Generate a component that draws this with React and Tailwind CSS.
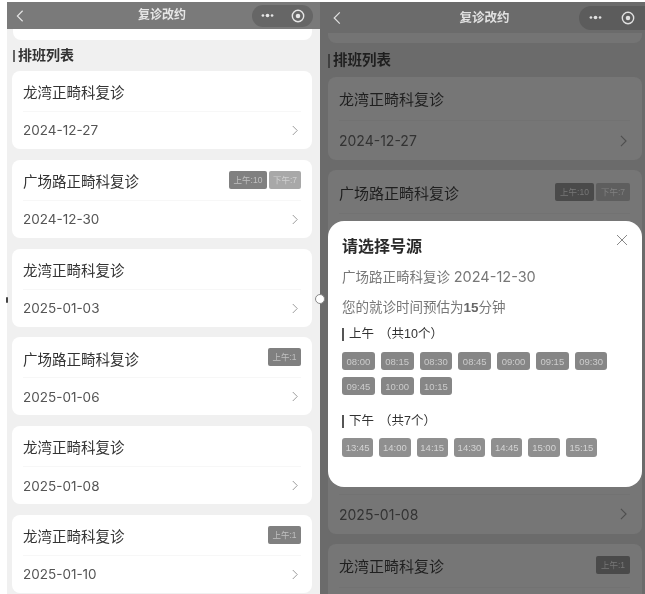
const F = { fontFamily: '"Liberation Sans","Noto Sans CJK SC",sans-serif' };
const L = { fontFamily: 'Inter,"Noto Sans CJK SC",sans-serif' };

const rows = [
  { name: "龙湾正畸科复诊", date: "2024-12-27", tags: [] },
  { name: "广场路正畸科复诊", date: "2024-12-30", tags: ["上午:10", "下午:7"], line: true },
  { name: "龙湾正畸科复诊", date: "2025-01-03", tags: [], line: true },
  { name: "广场路正畸科复诊", date: "2025-01-06", tags: ["上午:1"], line: true },
  { name: "龙湾正畸科复诊", date: "2025-01-08", tags: [], line: true },
  { name: "龙湾正畸科复诊", date: "2025-01-10", tags: ["上午:1"], line: true },
];

function Chevron({ className }) {
  return (
    <svg viewBox="0 0 8 14" className={className} fill="none" stroke="currentColor" strokeWidth="1.3">
      <path d="M1 1l6 6-6 6" />
    </svg>
  );
}

function Header({ dark }) {
  return (
    <div className={dark ? "grid h-[31px] shrink-0 grid-cols-[1fr_auto_1fr] items-center bg-[#6b6b6b] pl-[4px] text-[#e0e0e0]" : "grid h-[27px] shrink-0 grid-cols-[1fr_auto_1fr] items-center bg-[#7a7a7a] pl-[4px] pr-[7px] text-[#e6e6e6]"}>
      <svg viewBox="0 0 10 16" className={dark ? "ml-[9px] h-[14px] w-[8px]" : "ml-[5px] h-[12px] w-[8px]"} fill="none" stroke="currentColor" strokeWidth="1.5">
        <path d="M8.5 1L1.5 8l7 7" />
      </svg>
      <div className={dark ? "pt-[2px] text-center text-[12.5px] font-bold" : "pb-[2px] text-center text-[12px] font-bold"}>复诊改约</div>
      <div className="flex justify-end">
        <div className={dark ? "flex h-[24px] w-[66px] items-center justify-between rounded-l-full bg-[#5c5c5c] pl-[9px] pr-[10px]" : "flex h-[22px] w-[61px] items-center justify-between rounded-full bg-[#666666] pl-[8px] pr-[8px]"}>
          <svg viewBox="0 0 16 6" className="h-[5px] w-[15px]" fill="currentColor">
            <circle cx="2.5" cy="3" r="1.6" /><circle cx="8" cy="3" r="2.2" /><circle cx="13.5" cy="3" r="1.6" />
          </svg>
          <svg viewBox="0 0 16 16" className="h-[14px] w-[14px]" fill="none" stroke="currentColor">
            <circle cx="8" cy="8" r="6.5" strokeWidth="1.6" /><circle cx="8" cy="8" r="2.6" fill="currentColor" stroke="none" />
          </svg>
        </div>
      </div>
    </div>
  );
}

function Card({ row, dark }) {
  return (
    <div className={dark ? "flex h-[83px] shrink-0 flex-col rounded-[8px] bg-[#767676] pl-[11px] pr-[12px]" : "flex h-[78px] shrink-0 flex-col rounded-[8px] bg-white px-[11px]"}>
      <div className={dark ? "flex h-[44px] items-center justify-between border-b border-[#727272]" : "flex h-[41px] items-center justify-between border-b border-[#f7f7f7]"}>
        <span className={dark ? "pt-[4px] text-[15px] text-[#1f1f1f]" : "pt-[6px] text-[14.5px] text-[#333333]"}>{row.name}</span>
        <span className="flex gap-[2px]">
          {row.tags.map((t, i) => (
            <span key={t} className={
              dark
                ? (i === 0 ? "rounded-[2px] bg-[#4a4a4a] px-[5px] py-[3px] text-[8.5px] leading-[12px] text-[#777777]" : "rounded-[2px] bg-[#5e5e5e] px-[5px] py-[3px] text-[8.5px] leading-[12px] text-[#808080]")
                : (i === 0 ? "rounded-[2px] bg-[#808080] px-[4.5px] py-[3px] text-[8.5px] leading-[12px] text-[#c0c0c0]" : "rounded-[2px] bg-[#a8a8a8] px-[4px] py-[3px] text-[8.5px] leading-[12px] text-[#d0d0d0]")
            }>{t}</span>
          ))}
        </span>
      </div>
      <div className="flex flex-1 items-center justify-between">
        <span style={L} className={dark ? "text-[14px] text-[#333333]" : "text-[13.5px] text-[#555555]"}>{row.date}</span>
        <Chevron className={dark ? "mr-[3px] h-[12px] w-[7px] text-[#4f4f4f]" : "mr-[3px] h-[11px] w-[6px] text-[#999999]"} />
      </div>
    </div>
  );
}

function Chip({ t, pm }) {
  return (
    <span className={pm ? "rounded-[3px] bg-[#8f8f8f] px-[3.75px] py-[3px] text-[9.5px] leading-[13px] text-[#d4d4d4]" : "rounded-[3px] bg-[#868686] px-[4.5px] py-[2.5px] text-[9.5px] leading-[13px] text-[#cccccc]"}>{t}</span>
  );
}

function Modal() {
  const am = ["08:00","08:15","08:30","08:45","09:00","09:15","09:30","09:45","10:00","10:15"];
  const pm = ["13:45","14:00","14:15","14:30","14:45","15:00","15:15"];
  return (
    <div className="absolute left-[8px] top-[219px] h-[266px] w-[314px] rounded-[16px] bg-white pl-[14px] pr-[20px] pt-[15px]">
      <div className="text-[16px] font-bold leading-[22px] text-[#2a2a2a]">请选择号源</div>
      <svg viewBox="0 0 12 12" className="absolute right-[14px] top-[13px] h-[12px] w-[12px] text-[#888888]" fill="none" stroke="currentColor" strokeWidth="1">
        <path d="M1 1l10 10M11 1L1 11" />
      </svg>
      <div className="mt-[9px] text-[13.5px] leading-[20px] text-[#777777]">广场路正畸科复诊 <span style={L} className="text-[14.5px]">2024-12-30</span></div>
      <div className="mt-[10px] text-[13.5px] leading-[20px] text-[#777777]">您的就诊时间预估为<span className="font-bold text-[#666666]">15</span>分钟</div>
      <div className="mt-[8px] flex items-center text-[12.5px] leading-[16px] text-[#333333]">
        <span className="mr-[5px] h-[13px] w-[2px] bg-[#555555]" />上午<span className="ml-[5px]">（共10个）</span>
      </div>
      <div className="mt-[10px] flex flex-wrap gap-x-[6px] gap-y-[7px]">
        {am.map((t) => <Chip key={t} t={t} />)}
      </div>
      <div className="mt-[18px] flex items-center text-[12.5px] leading-[16px] text-[#333333]">
        <span className="mr-[5px] h-[13px] w-[2px] bg-[#555555]" />下午<span className="ml-[5px]">（共7个）</span>
      </div>
      <div className="mt-[9px] flex flex-wrap gap-x-[6px] gap-y-[7px]">
        {pm.map((t) => <Chip key={t} t={t} pm />)}
      </div>
    </div>
  );
}

export default function App() {
  return (
    <div style={F} className="relative flex h-[594px] w-[645px] overflow-hidden bg-white pl-[7px] pt-[2px] blur-[0.4px]">
      <div className="flex w-[313px] shrink-0 flex-col overflow-hidden bg-[#f0f0f0]">
        <Header />
        <div className="ml-[6px] mr-[8px] h-[11px] shrink-0 rounded-b-[8px] bg-white" />
        <div className="flex h-[31px] shrink-0 items-center">
          <span className="ml-[6px] mr-[3px] h-[12px] w-[2px] bg-[#666666]" />
          <span className="text-[14px] font-bold text-[#333333]">排班列表</span>
        </div>
        <div className="ml-[5px] mr-[8px] flex flex-col gap-[10.8px]">
          {rows.map((r) => <Card key={r.date} row={r} />)}
        </div>
      </div>
      <div className="relative flex w-[325px] shrink-0 flex-col overflow-hidden bg-[#6b6b6b]">
        <Header dark />
        <div className="ml-[8px] mr-[3px] h-[10px] shrink-0 rounded-b-[8px] bg-[#747474]" />
        <div className="flex h-[34px] shrink-0 items-center pt-[2px]">
          <span className="ml-[8px] mr-[3px] h-[14px] w-[2px] bg-[#3f3f3f]" />
          <span className="text-[14.5px] font-bold text-[#1f1f1f]">排班列表</span>
        </div>
        <div className="ml-[8px] mr-[3px] flex flex-col gap-[10.4px]">
          {rows.map((r) => <Card key={r.date} row={r} dark />)}
        </div>
        <Modal />
      </div>
      <span className="absolute left-[315px] top-[294px] h-[10px] w-[10px] rounded-full border border-[#888888] bg-white" />
      <span className="absolute left-[6px] top-[297px] h-[6px] w-[2px] rounded-full bg-[#444444]" />
    </div>
  );
}
